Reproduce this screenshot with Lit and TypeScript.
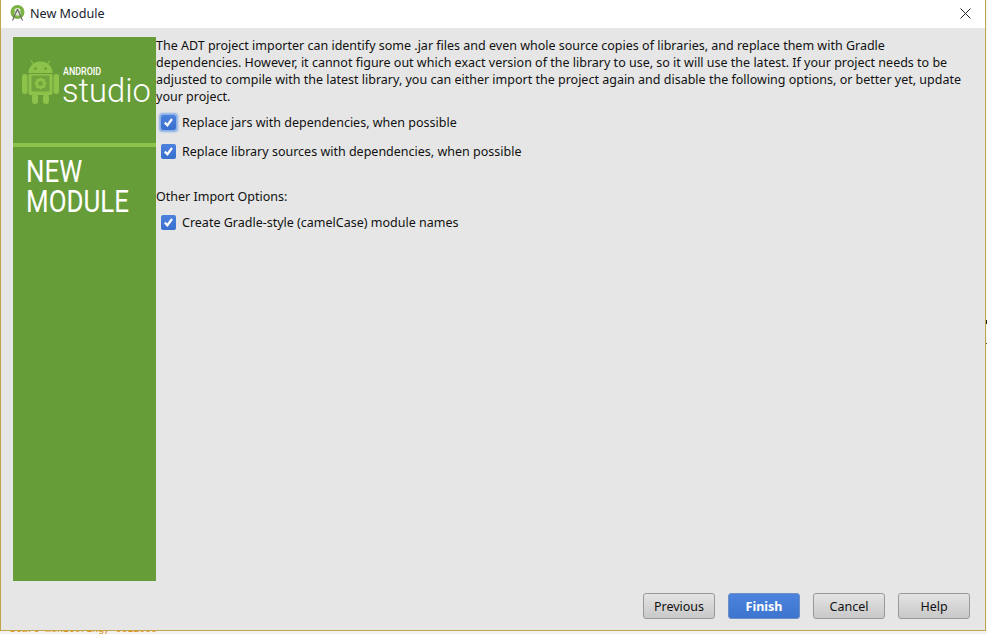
import { LitElement, css, html, svg } from 'lit'
import { customElement } from 'lit/decorators.js'

const options = [
  'Replace jars with dependencies, when possible',
  'Replace library sources with dependencies, when possible',
]

const tick = svg`<path d="M3.800 7.600 6.400 10.200 11 4" fill="none" stroke="#fff" stroke-width="2.200"/>`

@customElement('app-root')
export class AppRoot extends LitElement {
  static styles = css`
    :host {
      display: flex;
      flex-direction: column;
      width: 987px;
      height: 634px;
      overflow: hidden;
      background: #f2f2f2;
      font-family: 'Noto Sans', 'Open Sans', sans-serif;
      font-size: 12.5px;
      color: #111;
    }
    .top { display: flex; height: 631px; flex: none; }
    .edge {
      width: 1px;
      flex: none;
      background: linear-gradient(
        #f4f4f4 320px, #222 320px, #222 324px, #f4f4f4 324px,
        #f4f4f4 343px, #555 343px, #555 344px, #f4f4f4 344px
      );
    }
    .window {
      width: 986px;
      box-sizing: border-box;
      border: 1px solid #c0a54c;
      border-top: none;
      display: flex;
      flex-direction: column;
      background: #e6e6e6;
    }
    .title {
      height: 28px;
      flex: none;
      box-sizing: border-box;
      background: #fff;
      display: flex;
      align-items: center;
      padding: 0 9px 2px;
      gap: 5px;
      font-size: 12.6px;
      color: #1a2230;
    }
    .title .close { margin-left: auto; margin-right: 5px; display: block; }
    .body {
      flex: 1;
      display: flex;
      padding: 9px 0 0 12px;
      min-height: 0;
    }
    .side {
      width: 143px;
      height: 544px;
      flex: none;
      background: #679d38;
      display: flex;
      flex-direction: column;
    }
    .brand {
      flex: none;
      height: 110px;
      box-sizing: border-box;
      border-bottom: 4px solid #8dc34a;
      display: flex;
      padding: 23px 0 0 9px;
      gap: 3px;
      color: #fff;
    }
    .brand .words { display: flex; flex-direction: column; font-family: Roboto, sans-serif; }
    .brand .android {
      font-size: 10.5px;
      font-weight: 500;
      line-height: 10px;
      margin: 7px 0 0 1px;
      transform: scaleX(0.85);
      transform-origin: left;
    }
    .brand .studio { font-size: 32.7px; font-weight: 300; line-height: 30px; margin-top: -1px; }
    .heading {
      margin: 9px 0 0 13px;
      font-family: Roboto, sans-serif;
      font-weight: 400;
      font-size: 32px;
      line-height: 30px;
      color: #fff;
      transform: scaleX(0.81);
      transform-origin: left;
    }
    .main { flex: 1; min-width: 0; }
    .intro {
      margin: 0;
      line-height: 17px;
      width: 812px;
    }
    .check {
      display: flex;
      align-items: center;
      gap: 6px;
      margin-left: 5px;
      height: 20px;
    }
    .box {
      width: 15px;
      height: 15px;
      border-radius: 2px;
      background: linear-gradient(#4c82de, #3a70cd);
      flex: none;
      display: block;
    }
    .focused .box { box-shadow: 0 0 2px 1.5px #86aee6; }
    .options { display: flex; flex-direction: column; gap: 9px; margin-top: 7px; }
    .label { margin: 27px 0 6px; line-height: 18px; }
    .footer {
      flex: none;
      display: flex;
      justify-content: flex-end;
      gap: 13px;
      padding: 0 15px 11px 0;
    }
    button {
      width: 72px;
      height: 26px;
      box-sizing: border-box;
      border: 1px solid #999;
      border-radius: 3px;
      background: linear-gradient(#e4e4e4, #c8c8c8);
      font: inherit;
      color: #111;
      padding: 0;
    }
    button.primary {
      background: linear-gradient(#4c83dc, #3d74cf);
      border-color: #6c8fc4;
      color: #fff;
      font-weight: 700;
    }
    .behind {
      height: 3px;
      flex: none;
      overflow: hidden;
      padding-left: 10px;
      font-family: 'Liberation Mono', monospace;
      font-size: 9.8px;
      line-height: 12px;
      color: #e08a00;
    }
    .behind span { display: block; margin-top: -7px; }
  `

  private check(text: string, focused = false) {
    return html`<div class="check ${focused ? 'focused' : ''}">
      <svg class="box" viewBox="0 0 15 15">${tick}</svg>
      <span>${text}</span>
    </div>`
  }

  private bugdroid() {
    return html`<svg width="37" height="44" viewBox="0 0 37 44" fill="#8dc34a" style="flex:none">
      <path d="M6.500 13a12 11.500 0 0 1 24 0z"/>
      <path d="M11.500 4 9 .500M25.500 4 28 .500" stroke="#8dc34a" stroke-width="1.200"/>
      <circle cx="13.500" cy="8.500" r="1.300" fill="#679d38"/>
      <circle cx="23.500" cy="8.500" r="1.300" fill="#679d38"/>
      <rect x="0" y="14" width="5.500" height="20" rx="2.700"/>
      <rect x="31.500" y="14" width="5.500" height="20" rx="2.700"/>
      <path d="M6.500 14h24v19a2 2 0 0 1-2 2h-20a2 2 0 0 1-2-2z"/>
      <rect x="10" y="34" width="6" height="10" rx="3"/>
      <rect x="21" y="34" width="6" height="10" rx="3"/>
      <rect x="9.500" y="15.500" width="18" height="16" fill="#6fa53c"/>
      <circle cx="18.500" cy="23.500" r="4" fill="none" stroke="#8dc34a" stroke-width="2.500"/>
      <path d="M18.500 17.500v12M12.500 23.500h12M14.300 19.300l8.400 8.400M22.700 19.300l-8.400 8.400" stroke="#8dc34a" stroke-width="1.600"/>
      <circle cx="18.500" cy="23.500" r="2.300" fill="#6fa53c"/>
    </svg>`
  }

  render() {
    return html`
      <div class="top">
        <div class="window">
          <div class="title">
            <svg width="15" height="16" viewBox="0 0 15 16" style="flex:none">
              <circle cx="7.500" cy="7" r="7" fill="#7bb241"/>
              <path d="M4.500 6a3 3 0 0 1 6 0z" fill="#e9f2df"/>
              <rect x="4.500" y="6.500" width="6" height="4" fill="#dfe8d6"/>
              <path d="M7.500 4 2.500 15.500M7.500 4l5 11.500" stroke="#666" stroke-width="1.100"/>
            </svg>
            <span>New Module</span>
            <svg class="close" width="11" height="11" viewBox="0 0 11 11">
              <path d="M.5.500 10.500 10.500M10.500.500.500 10.500" stroke="#222" stroke-width="1"/>
            </svg>
          </div>
          <div class="body">
            <div class="side">
              <div class="brand">
                ${this.bugdroid()}
                <div class="words">
                  <span class="android">ANDROID</span>
                  <span class="studio">studio</span>
                </div>
              </div>
              <div class="heading">NEW<br />MODULE</div>
            </div>
            <div class="main">
              <p class="intro">The ADT project importer can identify some .jar files and even whole source copies of libraries, and replace them with Gradle dependencies. However, it cannot figure out which exact version of the library to use, so it will use the latest. If your project needs to be adjusted to compile with the latest library, you can either import the project again and disable the following options, or better yet, update your project.</p>
              <div class="options">
                ${options.map((o, i) => this.check(o, i === 0))}
              </div>
              <p class="label">Other Import Options:</p>
              ${this.check('Create Gradle-style (camelCase) module names')}
            </div>
          </div>
          <div class="footer">
            <button>Previous</button>
            <button class="primary">Finish</button>
            <button>Cancel</button>
            <button>Help</button>
          </div>
        </div>
        <div class="edge"></div>
      </div>
      <div class="behind"><span>Start monitoring, 0012000</span></div>
    `
  }
}
